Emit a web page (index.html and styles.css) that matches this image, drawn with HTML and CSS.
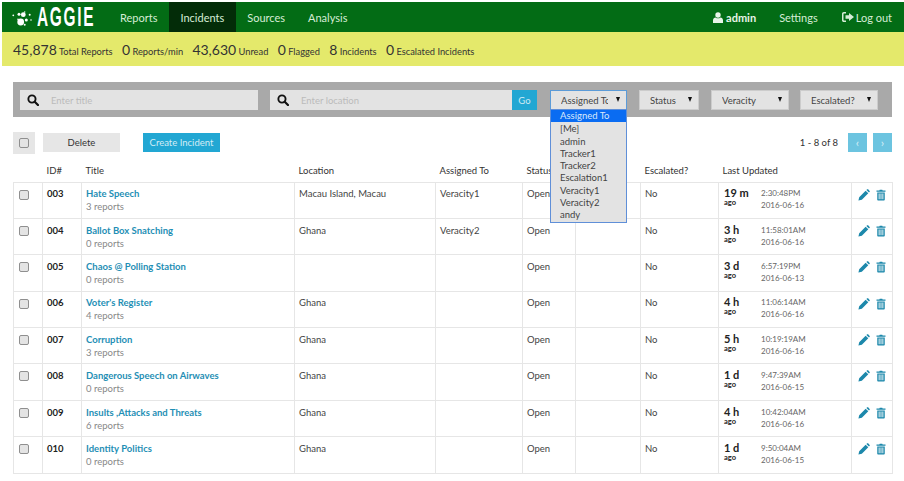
FILE: index.html
```html
<!DOCTYPE html>
<html lang="en">
<head>
    <meta charset="UTF-8">
    <title>Aggie - Incidents</title>
    <link rel="stylesheet" href="styles.css">
</head>
<body>
    <svg class="defs" width="0" height="0">
        <symbol id="i-search" viewBox="0 0 14 14"><circle cx="5.8" cy="5.8" r="4.2" fill="none" stroke="currentColor" stroke-width="2.2"/><path d="M9 9l3.8 3.8" stroke="currentColor" stroke-width="2.6" stroke-linecap="round"/></symbol>
        <symbol id="i-pencil" viewBox="0 0 14 14"><path d="M0.5 13.5l0.9-4 7.5-7.500 3.100 3.100-7.500 7.500zM9.800 1.200l0.900-0.800c0.400-0.300 0.800-0.300 1.100 0l1.800 1.800c0.300 0.300 0.300 0.800 0 1.100l-0.800 0.900z" fill="currentColor"/></symbol>
        <symbol id="i-trash" viewBox="0 0 12 14"><path d="M4 1.600l0.500-1h3l0.500 1h3.400v1.600H0.600V1.600zM1.500 4h9v8.600c0 0.500-0.400 0.900-0.900 0.900H2.400c-0.500 0-0.900-0.400-0.900-0.900zM3.200 5.200v7h1.100v-7zM5.450 5.200v7h1.100v-7zM7.700 5.200v7h1.100v-7z" fill="currentColor" fill-rule="evenodd"/></symbol>
    </svg>

    <nav class="topbar">
        <a class="brand" href="#">
            <svg class="brand-dots" viewBox="0 0 22 20" width="22" height="20">
                <circle cx="8.700" cy="15" r="3.400"/><circle cx="11.300" cy="7.700" r="2.400"/><circle cx="7" cy="7.300" r="1.500"/><circle cx="14.300" cy="13" r="1.500"/>
                <circle cx="1.300" cy="8.300" r="0.900"/><circle cx="17.700" cy="7.700" r="1"/><circle cx="19" cy="13" r="0.800"/><circle cx="12.700" cy="17.700" r="1"/><circle cx="12.700" cy="5" r="0.700"/><circle cx="6" cy="12.300" r="0.800"/>
            </svg>
            <span class="brand-name">AGGIE</span>
        </a>
        <a class="nav-link" href="#">Reports</a>
        <a class="nav-link active" href="#">Incidents</a>
        <a class="nav-link" href="#">Sources</a>
        <a class="nav-link" href="#">Analysis</a>
        <div class="nav-right">
            <a class="nav-user" href="#">
                <svg viewBox="0 0 10 11" width="10" height="11" fill="currentColor"><circle cx="5" cy="3" r="2.700"/><path d="M0 11V8.200C0 6.600 1.200 5.600 2.600 5.400 3.300 6 4.100 6.200 5 6.200S6.700 6 7.400 5.400C8.800 5.600 10 6.600 10 8.200V11z"/></svg>
                admin
            </a>
            <a class="nav-settings" href="#">Settings</a>
            <a class="nav-logout" href="#">
                <svg viewBox="0 0 12 10" width="12" height="10" fill="currentColor"><path d="M4 0v1.500H2C1.700 1.500 1.500 1.700 1.500 2v6c0 .3.2.5.5.5h2V10H1.800C.8 10 0 9.200 0 8.200V1.800C0 .8.8 0 1.800 0zM7 1l5 4-5 4V6.700H3.500V3.300H7z"/></svg>
                Log out
            </a>
        </div>
    </nav>

    <div class="stats">
        <span class="stat"><b>45,878</b> Total Reports</span>
        <span class="stat"><b>0</b> Reports/min</span>
        <span class="stat"><b>43,630</b> Unread</span>
        <span class="stat"><b>0</b> Flagged</span>
        <span class="stat"><b>8</b> Incidents</span>
        <span class="stat"><b>0</b> Escalated Incidents</span>
    </div>

    <main class="content">
        <div class="filters">
            <div class="search search-title">
                <svg class="search-icon"><use href="#i-search"/></svg>
                <span class="placeholder">Enter title</span>
            </div>
            <div class="search search-location">
                <svg class="search-icon"><use href="#i-search"/></svg>
                <span class="placeholder">Enter location</span>
            </div>
            <button class="go-btn">Go</button>
            <div class="picker picker-assigned open">
                <span class="picker-label">Assigned To</span><span class="caret"></span>
                <ul class="picker-menu">
                    <li class="selected">Assigned To</li>
                    <li>[Me]</li>
                    <li>admin</li>
                    <li>Tracker1</li>
                    <li>Tracker2</li>
                    <li>Escalation1</li>
                    <li>Veracity1</li>
                    <li>Veracity2</li>
                    <li>andy</li>
                </ul>
            </div>
            <div class="picker picker-status"><span class="picker-label">Status</span><span class="caret"></span></div>
            <div class="picker picker-veracity"><span class="picker-label">Veracity</span><span class="caret"></span></div>
            <div class="picker picker-escalated"><span class="picker-label">Escalated?</span><span class="caret"></span></div>
        </div>

        <div class="toolbar">
            <span class="check-all"><span class="checkbox"></span></span>
            <button class="delete-btn">Delete</button>
            <button class="create-btn">Create Incident</button>
            <div class="pager">
                <span class="pager-text">1 - 8 of 8</span>
                <button class="page-btn">&#8249;</button>
                <button class="page-btn">&#8250;</button>
            </div>
        </div>

        <table class="incidents">
            <colgroup>
                <col class="c-check"><col class="c-id"><col class="c-title"><col class="c-loc"><col class="c-assigned"><col class="c-status"><col class="c-veracity"><col class="c-esc"><col class="c-updated"><col class="c-actions">
            </colgroup>
            <thead>
                <tr><th></th><th>ID#</th><th>Title</th><th>Location</th><th>Assigned To</th><th>Status</th><th></th><th>Escalated?</th><th>Last Updated</th><th></th></tr>
            </thead>
            <tbody id="rows"></tbody>
        </table>
    </main>

    <script>
        var incidents = [
            ["003", "Hate Speech", "3 reports", "Macau Island, Macau", "Veracity1", "19 m", "2:30:48PM", "2016-06-16"],
            ["004", "Ballot Box Snatching", "0 reports", "Ghana", "Veracity2", "3 h", "11:58:01AM", "2016-06-16"],
            ["005", "Chaos @ Polling Station", "0 reports", "", "", "3 d", "6:57:19PM", "2016-06-13"],
            ["006", "Voter's Register", "4 reports", "Ghana", "", "4 h", "11:06:14AM", "2016-06-16"],
            ["007", "Corruption", "3 reports", "Ghana", "", "5 h", "10:19:19AM", "2016-06-16"],
            ["008", "Dangerous Speech on Airwaves", "0 reports", "Ghana", "", "1 d", "9:47:39AM", "2016-06-15"],
            ["009", "Insults ,Attacks and Threats", "6 reports", "Ghana", "", "4 h", "10:42:04AM", "2016-06-16"],
            ["010", "Identity Politics", "0 reports", "Ghana", "", "1 d", "9:50:04AM", "2016-06-15"]
        ];
        document.getElementById("rows").innerHTML = incidents.map(function(r) {
            return '<tr>' +
                '<td class="cell-check"><span class="checkbox"></span></td>' +
                '<td class="cell-id">' + r[0] + '</td>' +
                '<td><a class="title-link" href="#">' + r[1] + '</a><div class="sub">' + r[2] + '</div></td>' +
                '<td>' + r[3] + '</td>' +
                '<td>' + r[4] + '</td>' +
                '<td>Open</td><td></td><td>No</td>' +
                '<td><div class="updated"><div class="ago"><b>' + r[5] + '</b><span>ago</span></div>' +
                '<div class="stamp">' + r[6] + '<br>' + r[7] + '</div></div></td>' +
                '<td class="cell-actions"><svg class="act-pencil"><use href="#i-pencil"/></svg><svg class="act-trash"><use href="#i-trash"/></svg></td>' +
                '</tr>';
        }).join("");
    </script>
</body>
</html>
```

FILE: styles.css
```css
* {
    box-sizing: border-box;
}
html, body {
    margin: 0;
    height: 481px;
    overflow: hidden;
}
body {
    font-family: Lato, "Open Sans", sans-serif;
    font-size: 10.5px;
    color: #333;
    background: #fff;
    padding-top: 2px;
}
a {
    text-decoration: none;
    color: inherit;
}
button {
    font-family: inherit;
    border: 0;
}
.defs {
    position: absolute;
}

/* top bar */
.topbar {
    display: flex;
    align-items: stretch;
    height: 30px;
    margin-left: 2px;
    background: #036c15;
    color: #d6ecd6;
    font-size: 11px;
}
.brand {
    display: flex;
    align-items: center;
    width: 106.500px;
    padding-left: 10px;
    color: #fff;
}
.brand-dots {
    fill: #fff;
    flex: none;
}
.brand-name {
    font-family: "Liberation Sans", sans-serif;
    font-weight: 700;
    font-size: 27px;
    line-height: 30px;
    letter-spacing: 3px;
    margin-left: 3px;
    transform: scaleX(0.57);
    transform-origin: left center;
}
.nav-link {
    display: flex;
    align-items: center;
    padding: 0 11.500px;
}
.active {
    background: #032c08;
}
.nav-right {
    display: flex;
    align-items: center;
    margin-left: auto;
    padding-right: 12px;
}
.nav-user {
    display: flex;
    align-items: center;
    gap: 3px;
    font-weight: 700;
    color: #e8f4e8;
}
.nav-settings {
    margin-left: 23px;
}
.nav-logout {
    display: flex;
    align-items: center;
    gap: 2px;
    margin-left: 24px;
}

/* stats strip */
.stats {
    display: flex;
    align-items: center;
    gap: 9.300px;
    height: 34px;
    padding-left: 11px;
    margin-left: 2px;
    background: #e4e96b;
    color: #333;
    font-size: 9.300px;
}
.stat b {
    font-weight: 400;
    font-size: 14px;
}

/* filters */
.content {
    padding: 16px 12px 0 13px;
}
.filters {
    position: relative;
    display: flex;
    align-items: flex-start;
    height: 35px;
    padding-top: 8px;
    background: #a9a9a9;
}
.search {
    display: flex;
    align-items: center;
    height: 20px;
    background: #e3e3e3;
}
.search-title {
    width: 238px;
    margin-left: 7px;
}
.search-location {
    width: 242px;
    margin-left: 12px;
}
.search-icon {
    width: 12px;
    height: 12px;
    margin-left: 7px;
    color: #111;
    flex: none;
}
.placeholder {
    margin-left: 12px;
    color: #bbb;
    font-size: 9.500px;
}
.go-btn {
    width: 25px;
    height: 20px;
    background: #22a7d3;
    color: #cfeaf3;
    font-size: 9.500px;
    padding: 0;
}
.picker {
    position: relative;
    display: flex;
    align-items: center;
    height: 20px;
    padding-left: 10px;
    background: #e3e3e3;
    border: 1px solid #ccc;
    color: #444;
    font-size: 9.500px;
}
.picker-label {
    overflow: hidden;
    white-space: nowrap;
    width: 47px;
}
.caret {
    position: absolute;
    top: 6px;
    right: 6px;
    border-left: 2.500px solid transparent;
    border-right: 2.500px solid transparent;
    border-top: 5px solid #111;
}
.picker-assigned {
    width: 77px;
    margin-left: 13px;
    border-color: #5b9bd8;
}
.picker-status {
    width: 60px;
    margin-left: 12px;
}
.picker-veracity {
    width: 78px;
    margin-left: 12px;
}
.picker-escalated {
    width: 78px;
    margin-left: 11px;
}
.picker-escalated .picker-label {
    width: 50px;
}
.picker-menu {
    position: absolute;
    z-index: 2;
    top: 18px;
    left: -1px;
    width: 77px;
    margin: 0;
    padding: 0;
    list-style: none;
    background: #e3e3e3;
    border: 1px solid #5f8fd8;
}
.picker-menu li {
    height: 12.300px;
    line-height: 12.300px;
    padding-left: 9px;
}
.picker-menu .selected {
    background: #0a6cf2;
    color: #d9e8fb;
    margin-bottom: 1px;
}

/* actions above the table */
.toolbar {
    display: flex;
    align-items: center;
    height: 21px;
    margin-top: 15px;
}
.check-all {
    display: flex;
    align-items: center;
    justify-content: center;
    width: 22px;
    height: 22px;
    background: #e6e6e6;
}
.checkbox {
    display: block;
    width: 10px;
    height: 10px;
    border: 1px solid #8f8f8f;
    border-radius: 2px;
    background: #e4e4e4;
}
.delete-btn {
    width: 77px;
    height: 19px;
    margin-left: 8px;
    background: #e6e6e6;
    color: #333;
    font-size: 9.500px;
}
.create-btn {
    width: 77px;
    height: 19px;
    margin-left: 23px;
    background: #22a7d3;
    color: #d3edf6;
    font-size: 9.500px;
    padding: 0;
}
.pager {
    display: flex;
    align-items: center;
    margin-left: auto;
}
.pager-text {
    font-size: 9.500px;
    margin-right: 4px;
}
.page-btn {
    width: 19px;
    height: 19px;
    margin-left: 6px;
    padding: 0;
    background: #6cc4e0;
    color: #d7eff7;
    font-size: 12px;
}

/* table */
.incidents {
    width: 879px;
    margin-top: 7px;
    table-layout: fixed;
    border-collapse: collapse;
}
.c-check { width: 29px; }
.c-id { width: 39px; }
.c-title { width: 213px; }
.c-loc { width: 141px; }
.c-assigned { width: 87px; }
.c-status { width: 53px; }
.c-veracity { width: 65px; }
.c-esc { width: 78px; }
.c-updated { width: 133px; }
.c-actions { width: 41px; }
.incidents th {
    height: 22px;
    padding: 0 4px;
    text-align: left;
    font-weight: 400;
    font-size: 9.500px;
    white-space: nowrap;
    color: #333;
}
.incidents td {
    height: 36.400px;
    padding: 5.800px 4px 0;
    vertical-align: top;
    border: 1px solid #e6e6e6;
    font-size: 9.500px;
    line-height: 12px;
    color: #444;
}
.incidents .cell-check {
    padding: 7px 0 0 4.500px;
}
.incidents .cell-id {
    font-weight: 700;
    color: #222;
}
.title-link {
    color: #1f8fb5;
    font-weight: 700;
}
.sub {
    margin-top: 1px;
    color: #888;
}
.updated {
    display: flex;
    margin-top: -1px;
}
.ago {
    width: 38px;
    margin-left: 1px;
    line-height: 9px;
    color: #222;
}
.ago b {
    display: block;
    font-size: 11px;
    line-height: 11px;
}
.ago span {
    display: block;
    font-size: 7.500px;
    font-weight: 700;
}
.stamp {
    margin-left: -1px;
    font-size: 8px;
    line-height: 12px;
    color: #666;
}
.incidents .cell-actions {
    padding: 6px 0 0 6px;
    color: #1c88ab;
}
.act-pencil {
    width: 12px;
    height: 12px;
}
.act-trash {
    width: 10px;
    height: 12px;
    margin-left: 6px;
}
```
